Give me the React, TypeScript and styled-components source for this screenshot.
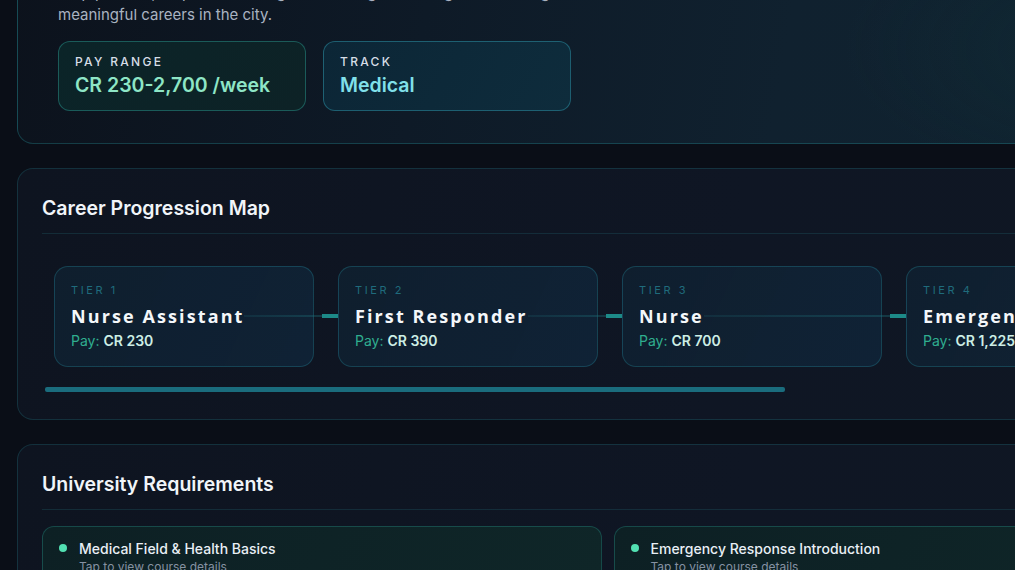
import React from "react";
import styled, { createGlobalStyle } from "styled-components";

const GlobalStyle = createGlobalStyle`
  html, body {
    margin: 0;
    padding: 0;
    background: #0a0e17;
    overflow: hidden;
  }
  body {
    font-family: Inter, "Noto Sans", sans-serif;
    color: #e8eef4;
  }
  * { box-sizing: border-box; }
`;

const Page = styled.main`
  width: 1181px;
  margin: -95px 0 0 17px;
  display: flex;
  flex-direction: column;
  gap: 24px;
`;

const Card = styled.section`
  border-radius: 16px;
  border: 1px solid rgba(40, 150, 160, 0.22);
  background: linear-gradient(100deg, #0e1420 0%, #0f1624 60%, #0f1723 100%);
  padding: 24px 24px 27px;
`;

const Hero = styled(Card)`
  padding: 32px 40px 32px;
  border-color: rgba(40, 160, 165, 0.3);
  background:
    radial-gradient(ellipse 420px 200px at 95% 60%, rgba(18, 60, 62, 0.25), transparent 70%),
    linear-gradient(100deg, #0c121c 0%, #0e1a27 35%, #10212f 65%, #0f2330 100%);
`;

const HeroTitle = styled.h1`
  margin: 0 0 8px;
  font-size: 28px;
  line-height: 36px;
  font-weight: 700;
  color: #f2f6fa;
`;

const Lead = styled.p`
  margin: 0 0 15px;
  font-size: 15px;
  line-height: 22px;
  color: #a9b3c1;
`;

const Stats = styled.div`
  display: flex;
  gap: 17px;
`;

const Stat = styled.div<{ $tone: "green" | "blue" }>`
  width: 248px;
  height: 70px;
  border-radius: 12px;
  padding: 12px 16px;
  border: 1px solid
    ${(p) => (p.$tone === "green" ? "rgba(45, 160, 150, 0.45)" : "rgba(45, 150, 170, 0.5)")};
  background: ${(p) =>
    p.$tone === "green"
      ? "linear-gradient(120deg, #0b2428 0%, #0d2226 100%)"
      : "linear-gradient(120deg, #0c2636 0%, #0e2c3c 100%)"};
  display: flex;
  flex-direction: column;
`;

const StatLabel = styled.span`
  font-size: 12px;
  line-height: 16px;
  font-weight: 500;
  letter-spacing: 2.3px;
  color: #d6dee6;
`;

const StatValue = styled.span<{ $tone: "green" | "blue" }>`
  margin-top: 2px;
  font-size: 19.5px;
  line-height: 26px;
  font-weight: 600;
  color: ${(p) => (p.$tone === "green" ? "#8ee6c6" : "#80e0ea")};
`;

const SectionHead = styled.h2`
  margin: 0;
  padding: 1px 0 11px;
  border-bottom: 1px solid rgba(40, 140, 150, 0.2);
  font-size: 19.5px;
  line-height: 28px;
  font-weight: 600;
  color: #f1f5f9;
`;

const TierScroller = styled.div`
  margin-top: 20px;
  overflow-x: auto;
  scrollbar-width: none;
  &::-webkit-scrollbar { display: none; }
`;

const TierRow = styled.div`
  display: flex;
  gap: 24px;
  width: max-content;
  padding: 12px 27px 12px 12px;
`;

const Tier = styled.article`
  width: 260px;
  height: 101px;
  border-radius: 14px;
  border: 1px solid rgba(40, 150, 165, 0.3);
  background: linear-gradient(115deg, rgba(16, 34, 50, 0.75) 0%, rgba(16, 40, 62, 0.7) 100%);
  padding: 16px 16px;
  display: flex;
  flex-direction: column;
`;

const TierLabel = styled.span`
  font-size: 11px;
  line-height: 14px;
  letter-spacing: 2.6px;
  color: #1f6b7c;
`;

const NameRow = styled.div`
  margin-top: 7px;
  display: flex;
  align-items: center;
  height: 24px;
`;

const TierName = styled.span`
  font-family: "Open Sans", Inter, sans-serif;
  font-size: 18px;
  line-height: 24px;
  font-weight: 700;
  letter-spacing: 2.1px;
  color: #f4f7fa;
  white-space: nowrap;
`;

const Connector = styled.span`
  flex: 1;
  height: 4px;
  margin-right: -41px;
  background:
    linear-gradient(#1d8a88, #1d8a88) right center / 16px 4px no-repeat,
    linear-gradient(90deg, rgba(30, 110, 120, 0.18), rgba(30, 120, 128, 0.35)) left center /
      calc(100% - 16px) 2px no-repeat;
`;

const Pay = styled.span`
  margin-top: 3px;
  font-size: 14px;
  line-height: 20px;
  color: #2fae8f;
`;

const PayValue = styled.span`
  color: #cdeee5;
  font-weight: 600;
`;

const ScrollTrack = styled.div`
  margin-top: 8px;
  padding-left: 3px;
  height: 5px;
`;

const ScrollThumb = styled.div`
  width: 740px;
  height: 5px;
  border-radius: 2px;
  background: #1a6c7d;
`;

const CourseGrid = styled.div`
  margin-top: 16px;
  display: grid;
  grid-template-columns: 1fr 1fr;
  gap: 12px;
`;

const Course = styled.div`
  border-radius: 12px;
  border: 1px solid rgba(40, 150, 140, 0.35);
  background: linear-gradient(120deg, #0d2024 0%, #0f2628 100%);
  padding: 12px 16px;
  display: flex;
  gap: 12px;
  align-items: flex-start;
`;

const Dot = styled.span`
  width: 8px;
  height: 8px;
  margin-top: 5px;
  border-radius: 50%;
  background: #52e0b2;
  flex: none;
`;

const CourseText = styled.div`
  display: flex;
  flex-direction: column;
`;

const CourseTitle = styled.span`
  font-size: 14px;
  line-height: 20px;
  font-weight: 500;
  color: #e9eff5;
`;

const CourseHint = styled.span`
  font-size: 12px;
  line-height: 16px;
  color: #8591a2;
`;

const tiers = [
  { tier: 1, name: "Nurse Assistant", pay: "CR 230" },
  { tier: 2, name: "First Responder", pay: "CR 390" },
  { tier: 3, name: "Nurse", pay: "CR 700" },
  { tier: 4, name: "Emergency Nurse", pay: "CR 1,225" },
  { tier: 5, name: "Paramedic Lead", pay: "CR 1,850" },
  { tier: 6, name: "Doctor", pay: "CR 2,700" },
];

const courses = [
  "Medical Field & Health Basics",
  "Emergency Response Introduction",
  "Patient Care Fundamentals",
  "Advanced Clinical Practice",
];

export default function App() {
  return (
    <>
      <GlobalStyle />
      <Page>
        <Hero>
          <HeroTitle>Medical Career Path</HeroTitle>
          <Lead>
            Help patients, respond to emergencies and grow through a rewarding ladder of roles toward
            <br />
            meaningful careers in the city.
          </Lead>
          <Stats>
            <Stat $tone="green">
              <StatLabel>PAY RANGE</StatLabel>
              <StatValue $tone="green">CR 230-2,700 /week</StatValue>
            </Stat>
            <Stat $tone="blue">
              <StatLabel>TRACK</StatLabel>
              <StatValue $tone="blue">Medical</StatValue>
            </Stat>
          </Stats>
        </Hero>

        <Card>
          <SectionHead>Career Progression Map</SectionHead>
          <TierScroller>
            <TierRow>
              {tiers.map((t, i) => (
                <Tier key={t.tier}>
                  <TierLabel>TIER {t.tier}</TierLabel>
                  <NameRow>
                    <TierName>{t.name}</TierName>
                    {i < tiers.length - 1 && <Connector />}
                  </NameRow>
                  <Pay>
                    Pay: <PayValue>{t.pay}</PayValue>
                  </Pay>
                </Tier>
              ))}
            </TierRow>
          </TierScroller>
          <ScrollTrack>
            <ScrollThumb />
          </ScrollTrack>
        </Card>

        <Card>
          <SectionHead>University Requirements</SectionHead>
          <CourseGrid>
            {courses.map((c) => (
              <Course key={c}>
                <Dot />
                <CourseText>
                  <CourseTitle>{c}</CourseTitle>
                  <CourseHint>Tap to view course details</CourseHint>
                </CourseText>
              </Course>
            ))}
          </CourseGrid>
        </Card>
      </Page>
    </>
  );
}
